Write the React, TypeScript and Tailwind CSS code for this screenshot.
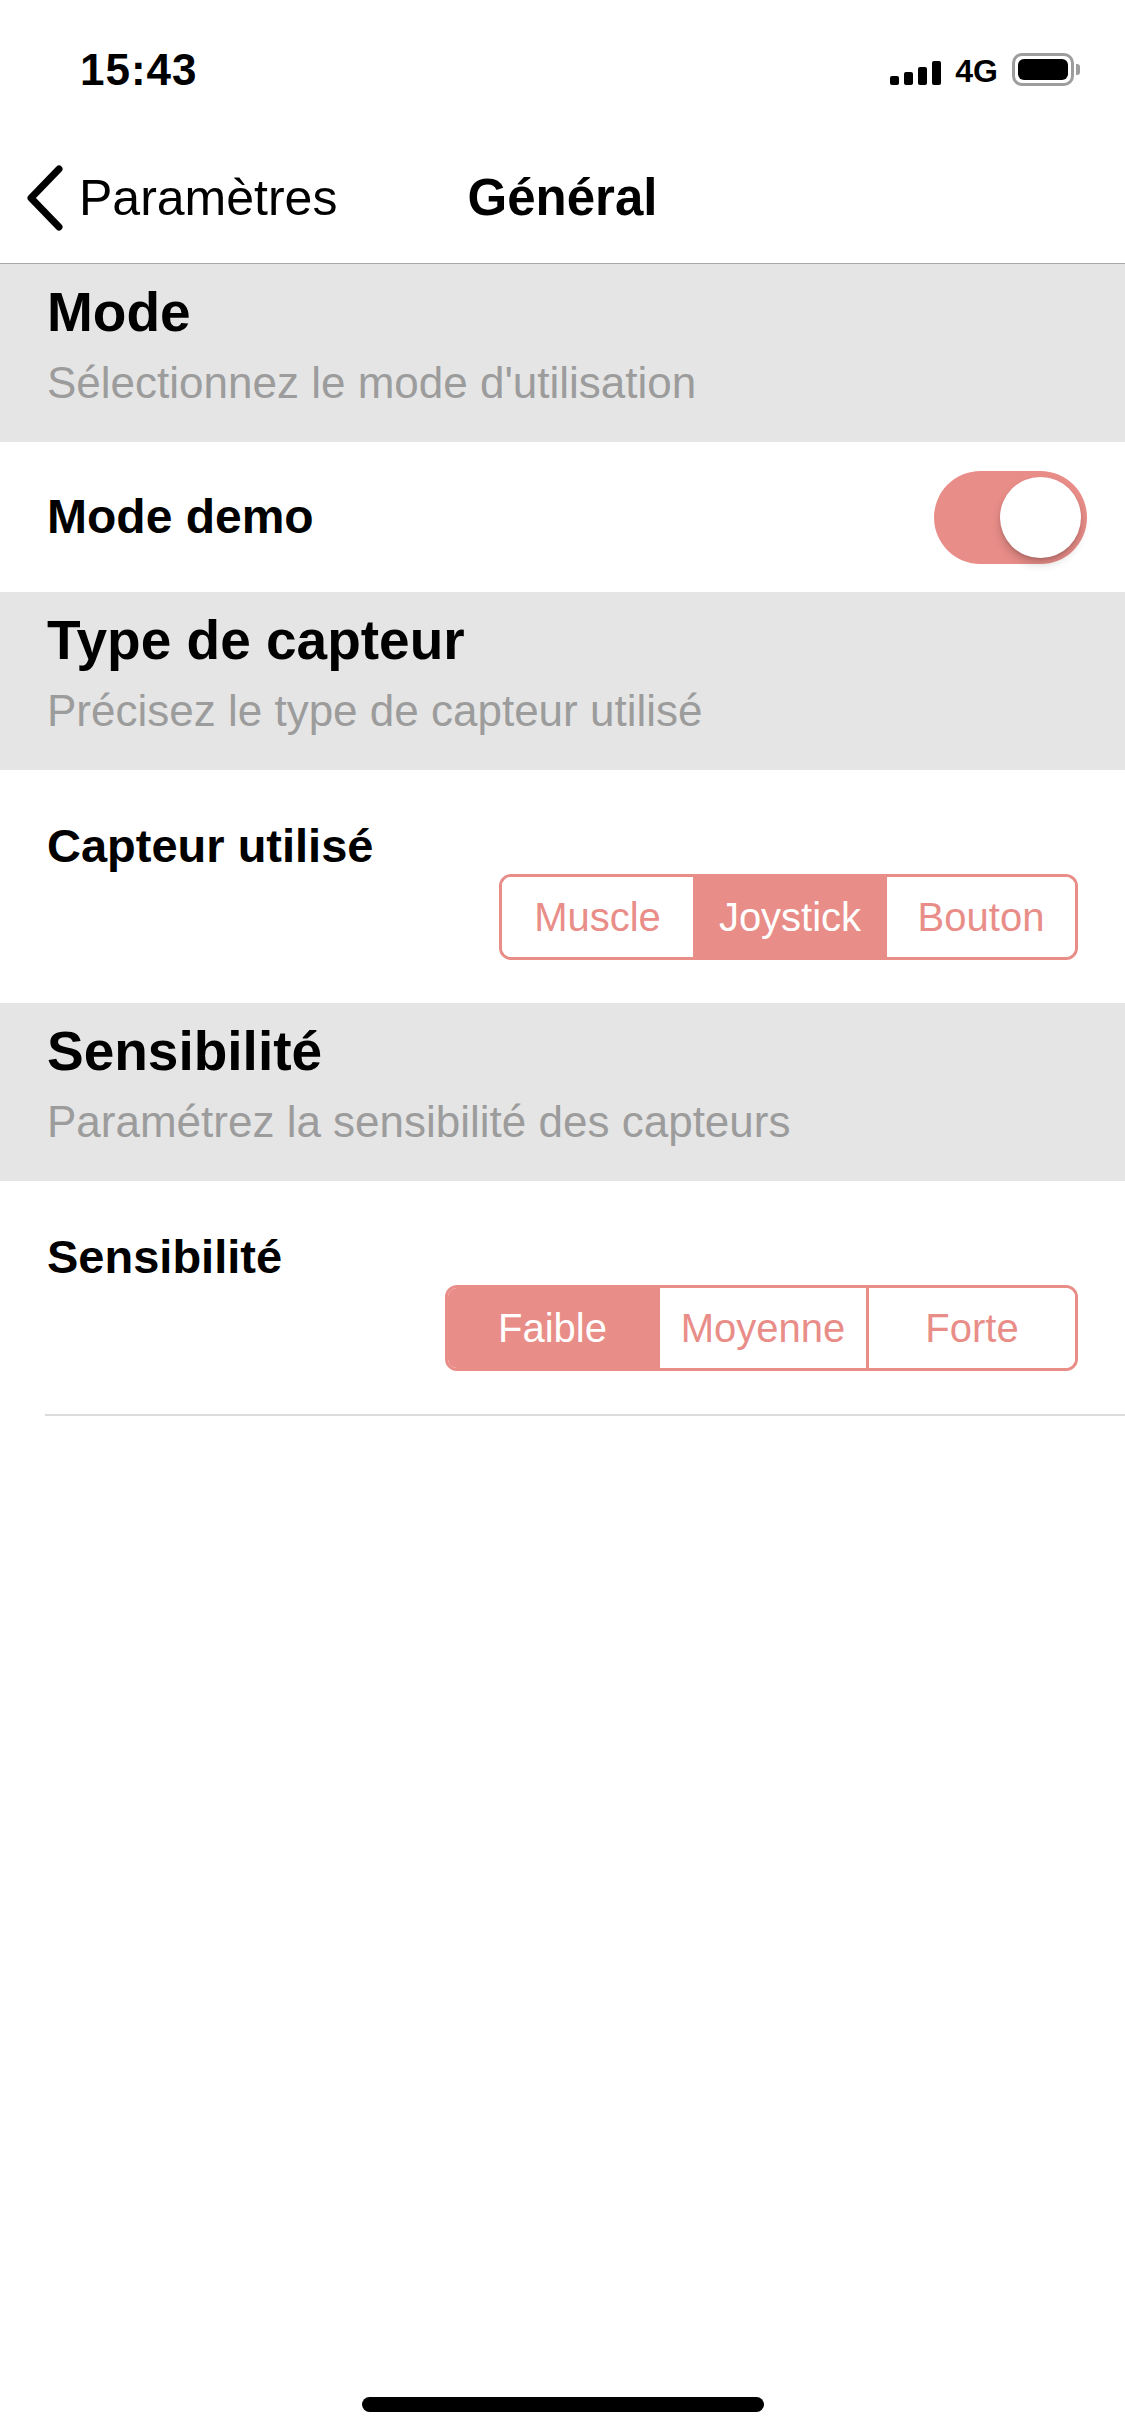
import { ReactNode } from "react";

const Header = ({ title, subtitle }: { title: string; subtitle: string }) => {
  return (
    <div className="bg-[#e5e5e5] pl-[47px] pt-[16px] pb-[34px]">
      <div className="text-[55px] leading-[64px] font-bold text-black">{title}</div>
      <div className="mt-[14px] text-[44px] leading-[50px] text-[#9c9c9c]">{subtitle}</div>
    </div>
  );
};

const Segmented = ({ items, active, segWidth }: { items: string[]; active: number; segWidth: string }) => {
  return (
    <div className="flex border-[3px] border-[#e98d88] rounded-[12px] overflow-hidden">
      {items.map((it, i) => (
        <div
          key={it}
          className={
            (i > 0 ? "border-l-[3px] border-[#e98d88] " : "") +
            (i === active ? "bg-[#e98d88] text-white " : "bg-white text-[#e98d88] ") +
            segWidth +
            " h-[80px] flex items-center justify-center text-[40px]"
          }
        >
          {it}
        </div>
      ))}
    </div>
  );
};

const ChoiceRow = ({ label, children }: { label: string; children: ReactNode }) => {
  return (
    <div className="pt-[48px] pb-[43px] pl-[47px] pr-[47px]">
      <div className="text-[47px] leading-[56px] font-bold text-black">{label}</div>
      <div className="flex justify-end">{children}</div>
    </div>
  );
};

const StatusBar = () => {
  return (
    <div className="h-[132px] flex justify-between items-start pl-[80px] pr-[45px]">
      <div className="pt-[44px] text-[44px] leading-[52px] font-bold tracking-[1px]">15:43</div>
      <div className="mt-[51px] flex items-center gap-[14px] h-[36px]">
        <div className="flex items-end gap-[5px] h-[24px] mt-[8px]">
          <div className="w-[9px] h-[9px] rounded-[2px] bg-black" />
          <div className="w-[9px] h-[13px] rounded-[2px] bg-black" />
          <div className="w-[9px] h-[18px] rounded-[2px] bg-black" />
          <div className="w-[9px] h-[24px] rounded-[2px] bg-black" />
        </div>
        <div className="text-[32px] leading-[36px] font-bold mt-[4px]">4G</div>
        <div className="flex items-center">
          <div className="w-[62px] h-[33px] rounded-[10px] border-[3px] border-[#9d9d9d] p-[3px]">
            <div className="w-full h-full rounded-[6px] bg-black" />
          </div>
          <div className="w-[4px] h-[11px] rounded-r-[3px] bg-[#9d9d9d] ml-[2px]" />
        </div>
      </div>
    </div>
  );
};

export default function App() {
  return (
    <div className="w-[1125px] h-[2436px] bg-white flex flex-col font-['Liberation_Sans',Arial,sans-serif] text-black">
      <StatusBar />
      <div className="h-[132px] grid grid-cols-[1fr_auto_1fr] items-center border-b border-[#a9a9a9]">
        <div className="flex items-center pl-[25px] gap-[14px]">
          <svg width="40" height="66" viewBox="0 0 40 66">
            <polyline points="34,4 6,33 34,62" fill="none" stroke="black" strokeWidth="7" strokeLinecap="round" strokeLinejoin="round" />
          </svg>
          <span className="text-[50px] leading-[60px]">Paramètres</span>
        </div>
        <div className="text-[51px] leading-[60px] font-bold">Général</div>
        <div />
      </div>

      <Header title="Mode" subtitle="Sélectionnez le mode d'utilisation" />
      <div className="h-[150px] flex items-center justify-between pl-[47px] pr-[38px]">
        <div className="text-[48px] leading-[56px] font-bold">Mode demo</div>
        <div className="w-[153px] h-[93px] rounded-full bg-[#e98d88] flex items-center justify-end pr-[6px]">
          <div className="w-[81px] h-[81px] rounded-full bg-white shadow-[0_6px_10px_rgba(0,0,0,0.18),0_2px_3px_rgba(0,0,0,0.1)]" />
        </div>
      </div>

      <Header title="Type de capteur" subtitle="Précisez le type de capteur utilisé" />
      <ChoiceRow label="Capteur utilisé">
        <Segmented items={["Muscle", "Joystick", "Bouton"]} active={1} segWidth="w-[191px]" />
      </ChoiceRow>

      <Header title="Sensibilité" subtitle="Paramétrez la sensibilité des capteurs" />
      <ChoiceRow label="Sensibilité">
        <Segmented items={["Faible", "Moyenne", "Forte"]} active={0} segWidth="w-[209px]" />
      </ChoiceRow>
      <div className="ml-[45px] h-[2px] bg-[#dcdcdc]" />

      <div className="mt-auto mb-[24px] self-center w-[402px] h-[15px] rounded-full bg-black" />
    </div>
  );
}
